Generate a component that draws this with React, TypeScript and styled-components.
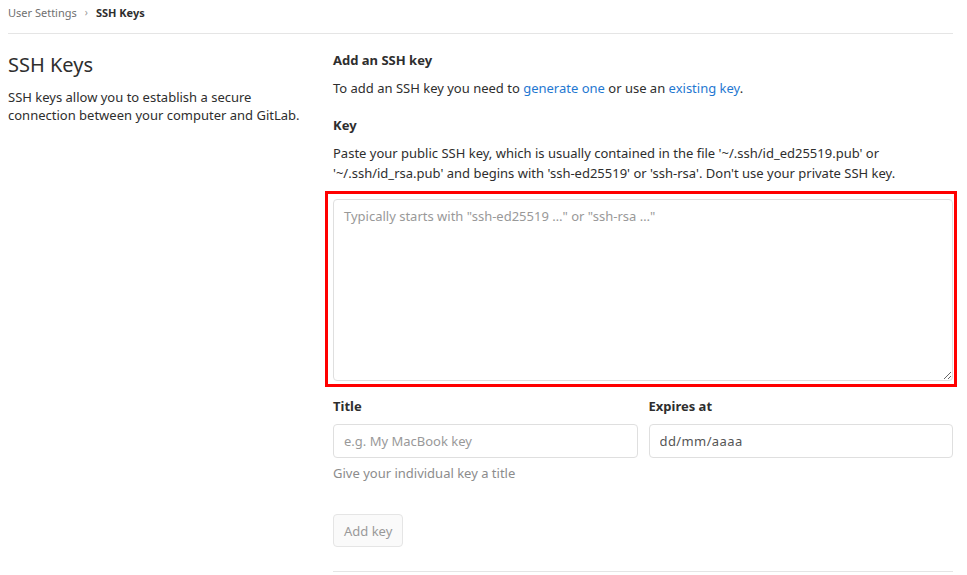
import React from "react";
import styled, { createGlobalStyle } from "styled-components";

const Global = createGlobalStyle`
  html, body { margin: 0; padding: 0; background: #fff; }
  body {
    font-family: "Noto Sans", "Open Sans", sans-serif;
    color: #2e2e2e;
    font-size: 14px;
  }
  * { box-sizing: border-box; }
`;

const Page = styled.div`
  padding: 0 14px 0 8px;
`;

const Breadcrumbs = styled.nav`
  display: flex;
  align-items: center;
  gap: 6px;
  height: 34px;
  padding-bottom: 9px;
  border-bottom: 1px solid #e5e5e5;
  font-size: 11px;
`;

const Crumb = styled.span<{ $current?: boolean }>`
  color: ${(p) => (p.$current ? "#2e2e2e" : "#707070")};
  font-weight: ${(p) => (p.$current ? 700 : 400)};
`;

const Chevron = styled.span`
  color: #999;
  font-size: 10px;
  margin: 0 2px;
`;

const Layout = styled.div`
  display: grid;
  grid-template-columns: 325px 1fr;
`;

const Sidebar = styled.div`
  padding-top: 17px;
`;

const SidebarTitle = styled.h4`
  margin: 0;
  font-size: 20px;
  font-weight: 400;
  line-height: 28px;
  color: #2e2e2e;
`;

const SidebarText = styled.p`
  margin: 9px 0 0;
  font-size: 13px;
  line-height: 18px;
  color: #2e2e2e;
`;

const Main = styled.div`
  padding-top: 16px;
`;

const SectionTitle = styled.h5`
  margin: 0;
  font-size: 13px;
  font-weight: 700;
  line-height: 20px;
  color: #2e2e2e;
`;

const Text = styled.p<{ $mt?: number }>`
  margin: ${(p) => p.$mt ?? 0}px 0 0;
  font-size: 13px;
  line-height: 20px;
  color: #2e2e2e;
`;

const Link = styled.a`
  color: #1f78d1;
  text-decoration: none;
`;

const Label = styled.label<{ $mt?: number }>`
  display: block;
  margin-top: ${(p) => p.$mt ?? 0}px;
  font-size: 13px;
  font-weight: 700;
  line-height: 20px;
  color: #2e2e2e;
`;

const Highlight = styled.div`
  margin: 8px -4px 0 -8px;
  padding: 5px 1px 3px 5px;
  border: 3px solid #ff0000;
`;

const KeyField = styled.textarea`
  display: block;
  width: 100%;
  height: 182px;
  padding: 6px 10px;
  border: 1px solid #dfdfdf;
  border-radius: 4px;
  font-family: inherit;
  font-size: 13px;
  line-height: 20px;
  color: #2e2e2e;
  outline: none;
  resize: vertical;
  &::placeholder { color: #999; }
`;

const FieldRow = styled.div`
  display: grid;
  grid-template-columns: 1fr 1fr;
  gap: 11px;
  margin-top: 9px;
`;

const Field = styled.div``;

const Input = styled.input`
  display: block;
  width: 100%;
  height: 34px;
  margin-top: 8px;
  padding: 6px 10px;
  border: 1px solid #dfdfdf;
  border-radius: 4px;
  font-family: inherit;
  font-size: 13px;
  color: #555;
  letter-spacing: ${(p) => (p.readOnly ? "0.4px" : "0")};
  &::placeholder { color: #999; }
`;

const Hint = styled.p`
  margin: 6px 0 0;
  font-size: 13px;
  line-height: 18px;
  color: #8c8c8c;
`;

const Actions = styled.div`
  margin-top: 32px;
  padding-bottom: 24px;
  border-bottom: 1px solid #e5e5e5;
`;

const Button = styled.button`
  height: 33px;
  padding: 0 10px;
  border: 1px solid #e5e5e5;
  border-radius: 4px;
  background: #fafafa;
  color: #999;
  font-family: inherit;
  font-size: 13px;
`;

export default function App() {
  return (
    <>
      <Global />
      <Page>
        <Breadcrumbs>
          <Crumb>User Settings</Crumb>
          <Chevron>›</Chevron>
          <Crumb $current>SSH Keys</Crumb>
        </Breadcrumbs>
        <Layout>
          <Sidebar>
            <SidebarTitle>SSH Keys</SidebarTitle>
            <SidebarText>
              SSH keys allow you to establish a secure
              <br />
              connection between your computer and GitLab.
            </SidebarText>
          </Sidebar>
          <Main>
            <SectionTitle>Add an SSH key</SectionTitle>
            <Text $mt={8}>
              To add an SSH key you need to <Link href="#">generate one</Link> or use an{" "}
              <Link href="#">existing key</Link>.
            </Text>
            <Label $mt={17}>Key</Label>
            <Text $mt={8}>
              Paste your public SSH key, which is usually contained in the file '~/.ssh/id_ed25519.pub' or
              <br />
              '~/.ssh/id_rsa.pub' and begins with 'ssh-ed25519' or 'ssh-rsa'. Don't use your private SSH key.
            </Text>
            <Highlight>
              <KeyField placeholder={'Typically starts with "ssh-ed25519 …" or "ssh-rsa …"'} />
            </Highlight>
            <FieldRow>
              <Field>
                <Label>Title</Label>
                <Input placeholder="e.g. My MacBook key" />
                <Hint>Give your individual key a title</Hint>
              </Field>
              <Field>
                <Label>Expires at</Label>
                <Input readOnly value="dd/mm/aaaa" />
              </Field>
            </FieldRow>
            <Actions>
              <Button disabled>Add key</Button>
            </Actions>
          </Main>
        </Layout>
      </Page>
    </>
  );
}
